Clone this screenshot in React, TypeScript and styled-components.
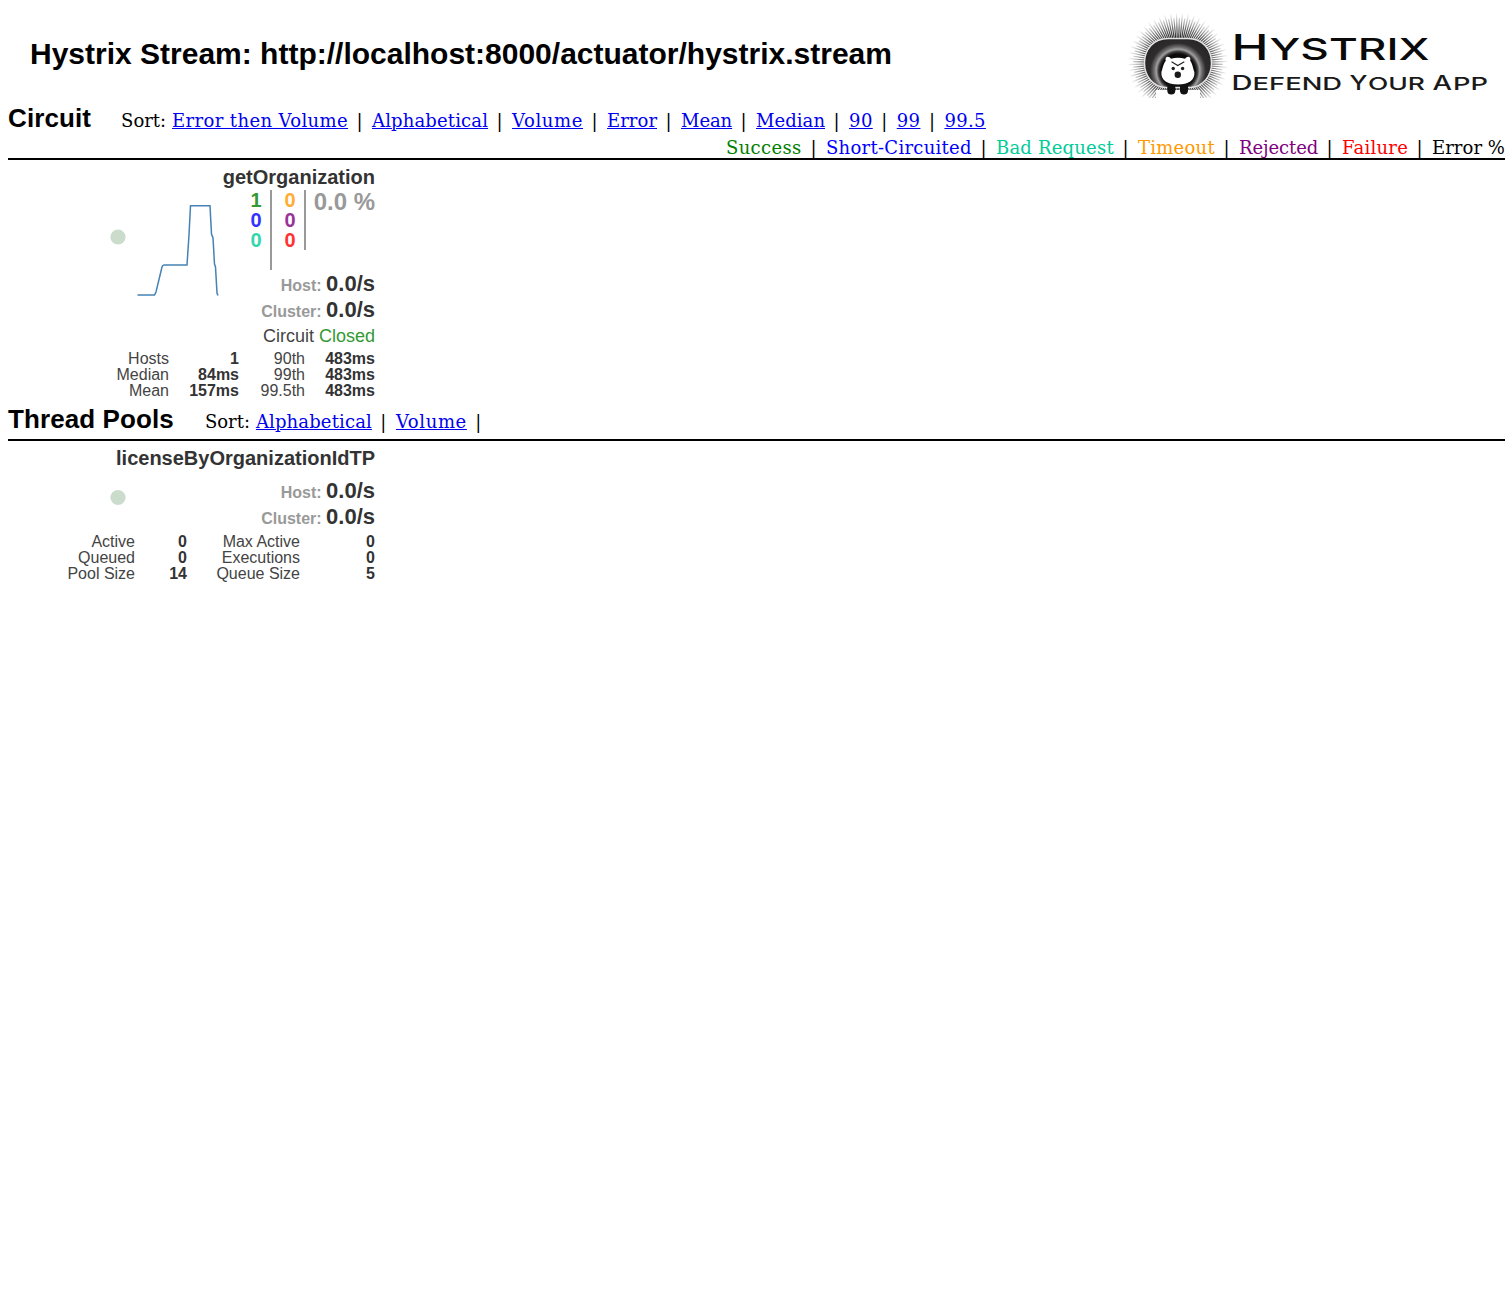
import React from "react";
import styled, { createGlobalStyle } from "styled-components";

const SANS = '"Liberation Sans", Arial, Helvetica, sans-serif';
const SERIF = '"DejaVu Serif", "Bookman Old Style", serif';

const GlobalStyle = createGlobalStyle`
  body { margin: 0; background: #fff; color: #000; }
  #root { width: 1512px; }
`;

const Page = styled.main`
  padding: 0 7px 0 8px;
  font: 18px/24px ${SERIF};
`;

const Header = styled.header`
  display: flex;
  justify-content: space-between;
  height: 103px;
  padding: 0 13px 0 22px;
`;

const Title = styled.h1`
  margin: 36px 0 0;
  font: bold 30px/36px ${SANS};
  white-space: nowrap;
`;

const LogoSvg = styled.svg`
  width: 364px;
  height: 90px;
  margin-top: 11px;
`;

const Section = styled.section`
  display: flex;
  flex-direction: column;
`;

const SectionBar = styled.div<{ $top?: number; $bottom?: number }>`
  display: flex;
  flex-direction: column;
  padding: ${(p) => p.$top ?? 0}px 0 ${(p) => p.$bottom ?? 0}px;
  border-bottom: 2px solid #000;
`;

const HeadRow = styled.div`
  display: flex;
  align-items: baseline;
  height: 30px;
`;

const Heading = styled.h2<{ $gap: number }>`
  margin: 0 ${(p) => p.$gap}px 0 0;
  font: bold 26px/30px ${SANS};
  letter-spacing: 0.1px;
  white-space: nowrap;
`;

const SortLabel = styled.span`
  width: 51px;
  line-height: 30px;
  white-space: nowrap;
`;

const Item = styled.span<{ $width: number; $spacing: number; $color?: string }>`
  width: ${(p) => p.$width}px;
  letter-spacing: ${(p) => p.$spacing}px;
  color: ${(p) => p.$color ?? "#000"};
  white-space: nowrap;
`;

const SortLink = styled(Item).attrs({ as: "a", href: "#" })`
  color: #0000ee;
  text-decoration: underline 1px;
  text-underline-offset: 1px;
`;

const Separator = styled.span`
  width: 24px;
  padding-right: 1px;
  box-sizing: border-box;
  text-align: center;
`;

const Legend = styled.div`
  display: flex;
  justify-content: flex-end;
  height: 22px;
  margin-top: 3px;
`;

const Tile = styled.article`
  width: 367px;
  color: #333;
  font: 16px/16px ${SANS};
`;

const TileName = styled.h3`
  margin: 5px 0 0;
  text-align: right;
  font: bold 20px/25px ${SANS};
`;

const TileBody = styled.div`
  display: flex;
  justify-content: space-between;
`;

const Plot = styled.svg`
  width: 215px;
  flex: none;
`;

const Readout = styled.div<{ $top: number }>`
  display: flex;
  flex-direction: column;
  align-items: flex-end;
  padding-top: ${(p) => p.$top}px;
`;

const Counters = styled.div`
  display: flex;
  align-items: flex-start;
  height: 81px;
  font-weight: bold;
`;

const CounterColumn = styled.div<{ $height: number; $width: number }>`
  display: flex;
  flex-direction: column;
  box-sizing: border-box;
  width: ${(p) => p.$width}px;
  height: ${(p) => p.$height}px;
  padding-right: 8.5px;
  border-right: 2px solid #999;
  text-align: right;
  font-size: 20px;
  line-height: 20px;
`;

const Count = styled.span<{ $color: string }>`
  color: ${(p) => p.$color};
`;

const ErrorRate = styled.div`
  width: 69px;
  color: #999;
  text-align: right;
  font-size: 24px;
  line-height: 24px;
  white-space: nowrap;
`;

const Rate = styled.div`
  height: 26px;
  font: bold 22px/26px ${SANS};
  white-space: nowrap;
`;

const RateLabel = styled.span`
  color: #999;
  font-size: 16px;
`;

const Status = styled.div`
  color: #444;
  font-size: 18px;
  line-height: 26px;
  span { color: #339933; }
`;

const Metrics = styled.div<{ $columns: string; $top: number }>`
  display: grid;
  grid-template-columns: ${(p) => p.$columns};
  grid-auto-rows: 16px;
  margin-top: ${(p) => p.$top}px;
  text-align: right;
  white-space: nowrap;
`;

const Name = styled.span`
  color: #444;
`;

const Value = styled.b`
  color: #333;
`;

type Entry = { text: string; width: number; spacing: number; color?: string };

const circuitSorts: Entry[] = [
  { text: "Error then Volume", width: 176, spacing: 0.38 },
  { text: "Alphabetical", width: 116, spacing: 0.14 },
  { text: "Volume", width: 71, spacing: 0.62 },
  { text: "Error", width: 50, spacing: 0.04 },
  { text: "Mean", width: 51, spacing: -0.08 },
  { text: "Median", width: 69, spacing: 0.05 },
  { text: "90", width: 23.7, spacing: 0.4 },
  { text: "99", width: 23.7, spacing: 0.4 },
  { text: "99.5", width: 41.5, spacing: 0.35 },
];

const poolSorts: Entry[] = [
  { text: "Alphabetical", width: 116, spacing: 0.14 },
  { text: "Volume", width: 71, spacing: 0.62 },
];

const legend: Entry[] = [
  { text: "Success", width: 76, spacing: 0.35, color: "green" },
  { text: "Short-Circuited", width: 146, spacing: 0.28, color: "blue" },
  { text: "Bad Request", width: 118, spacing: 0.2, color: "#00cc99" },
  { text: "Timeout", width: 77, spacing: 0.25, color: "#ff9900" },
  { text: "Rejected", width: 79, spacing: -0.1, color: "purple" },
  { text: "Failure", width: 66, spacing: 0.25, color: "red" },
  { text: "Error %", width: 73, spacing: 0.05 },
];

const circuitMetrics = [
  ["Hosts", "1", "90th", "483ms"],
  ["Median", "84ms", "99th", "483ms"],
  ["Mean", "157ms", "99.5th", "483ms"],
];

const poolMetrics = [
  ["Active", "0", "Max Active", "0"],
  ["Queued", "0", "Executions", "0"],
  ["Pool Size", "14", "Queue Size", "5"],
];

function SortBar({ items, trailing }: { items: Entry[]; trailing?: boolean }) {
  return (
    <>
      <SortLabel>Sort:</SortLabel>
      {items.map((it, i) => (
        <React.Fragment key={it.text}>
          <SortLink $width={it.width} $spacing={it.spacing}>{it.text}</SortLink>
          {(trailing || i < items.length - 1) && <Separator>|</Separator>}
        </React.Fragment>
      ))}
    </>
  );
}

function MetricGrid({ rows, columns, top }: { rows: string[][]; columns: string; top: number }) {
  return (
    <Metrics $columns={columns} $top={top}>
      {rows.flatMap((row, r) =>
        row.map((cell, c) => (c % 2 ? <Value key={`${r}-${c}`}>{cell}</Value> : <Name key={`${r}-${c}`}>{cell}</Name>))
      )}
    </Metrics>
  );
}

function Rates() {
  return (
    <>
      <Rate><RateLabel>Host: </RateLabel>0.0/s</Rate>
      <Rate><RateLabel>Cluster: </RateLabel>0.0/s</Rate>
    </>
  );
}

const QUILLS = 104;

function Logo() {
  const quills = Array.from({ length: QUILLS }, (_, i) => {
    const a = ((i + 0.5) / QUILLS) * Math.PI * 2;
    const reach = i % 2 ? 50 : 45;
    return { x: 50 + Math.cos(a) * reach, y: 52 + Math.sin(a) * reach };
  });
  return (
    <LogoSvg viewBox="0 0 364 90">
      <defs>
        <radialGradient id="quill" gradientUnits="userSpaceOnUse" cx="50" cy="52" r="50">
          <stop offset="0.5" stopColor="#222" />
          <stop offset="0.7" stopColor="#333" stopOpacity="0.75" />
          <stop offset="0.85" stopColor="#555" stopOpacity="0.4" />
          <stop offset="1" stopColor="#777" stopOpacity="0.04" />
        </radialGradient>
        <radialGradient id="body" gradientUnits="userSpaceOnUse" cx="50" cy="60" r="34">
          <stop offset="0.5" stopColor="#0c0a0b" />
          <stop offset="0.57" stopColor="#3a3839" />
          <stop offset="0.64" stopColor="#a0a0a0" />
          <stop offset="0.71" stopColor="#6c6a6b" />
          <stop offset="0.82" stopColor="#2f2c2d" />
          <stop offset="1" stopColor="#2a2728" />
        </radialGradient>
        <clipPath id="ground"><path d="M0 0H100V87H72V79H28V87H0Z" /></clipPath>
      </defs>
      <g clipPath="url(#ground)" stroke="url(#quill)" strokeWidth="1.2">
        {quills.map((q, i) => <line key={i} x1="50" y1="52" x2={q.x} y2={q.y} />)}
      </g>
      <path d="M40 27.5H60C74 27.5 83.5 38 83.5 52C83.5 65 75 75.5 63 76.5H37C25 75.5 16.5 65 16.5 52C16.5 38 26 27.5 40 27.5Z" fill="url(#body)" stroke="#e4e4e4" strokeWidth="1.4" />
      <path d="M39.3 70H47.3V80Q47 83.5 43.3 83.5T39.3 80ZM52 70H60V80Q59.6 83.5 56 83.5T52 80Z" fill="#111" />
      <path d="M37.8 49.8C36.3 45 41.3 44.6 43 47.8Q50 45.6 57 47.8C59 44.6 63.5 45 62.2 49.8C64.7 53 64.5 56 66.4 61C67.2 69.5 60 73.5 50 73.5S32.6 69.5 33.4 61C35.2 56 35.2 53 37.8 49.8Z" fill="#fff" />
      <path d="M43.5 50.8L49.8 54.5L56.3 50.8" fill="none" stroke="#222" strokeWidth="1.1" />
      <circle cx="45.2" cy="57.5" r="1.7" fill="#222" />
      <circle cx="54.6" cy="57.5" r="1.7" fill="#222" />
      <circle cx="49.8" cy="63.8" r="3.2" fill="#1a1a1a" />
      <g fontFamily='Inter, "Open Sans", sans-serif'>
        <g fill="#0a0a0a" fontWeight="500">
          <text x="103.6" y="49.3" fontSize="36" textLength="37" lengthAdjust="spacingAndGlyphs">H</text>
          <text x="141.5" y="49.3" fontSize="30" textLength="160" lengthAdjust="spacingAndGlyphs">YSTRIX</text>
        </g>
        <g fill="#1a1a1a" fontWeight="500">
          <text x="103.5" y="79.3" fontSize="20" textLength="21" lengthAdjust="spacingAndGlyphs">D</text>
          <text x="124.6" y="79.3" fontSize="17.7" textLength="89.5" lengthAdjust="spacingAndGlyphs">EFEND</text>
          <text x="221.5" y="79.3" fontSize="20" textLength="18" lengthAdjust="spacingAndGlyphs">Y</text>
          <text x="240" y="79.3" fontSize="17.7" textLength="57" lengthAdjust="spacingAndGlyphs">OUR</text>
          <text x="304.5" y="79.3" fontSize="20" textLength="19.5" lengthAdjust="spacingAndGlyphs">A</text>
          <text x="325" y="79.3" fontSize="17.7" textLength="35" lengthAdjust="spacingAndGlyphs">PP</text>
        </g>
      </g>
    </LogoSvg>
  );
}

export default function App() {
  return (
    <>
      <GlobalStyle />
      <Page>
        <Header>
          <Title>Hystrix Stream: http://localhost:8000/actuator/hystrix.stream</Title>
          <Logo />
        </Header>

        <Section>
          <SectionBar>
            <HeadRow>
              <Heading $gap={30}>Circuit</Heading>
              <SortBar items={circuitSorts} />
            </HeadRow>
            <Legend>
              {legend.map((it, i) => (
                <React.Fragment key={it.text}>
                  {i > 0 && <Separator>|</Separator>}
                  <Item $width={it.width} $spacing={it.spacing} $color={it.color}>{it.text}</Item>
                </React.Fragment>
              ))}
            </Legend>
          </SectionBar>
          <Tile>
            <TileName>getOrganization</TileName>
            <TileBody>
              <Plot viewBox="0 0 215 159" height="159">
                <circle cx="110" cy="47" r="7.6" fill="#ccdccc" />
                <path
                  d="M129.5 105H146.5L148 102L154 77Q154.5 75 156 75H179L181 45L182.5 15.7H202L203.5 44L205 48L206.5 74L207.5 77L209 103L210 105.5"
                  fill="none" stroke="#4682b4" strokeWidth="1.5"
                />
              </Plot>
              <Readout $top={0}>
                <Counters>
                  <CounterColumn $height={80} $width={40}>
                    <Count $color="#339933">1</Count>
                    <Count $color="#3333ff">0</Count>
                    <Count $color="#33d6ad">0</Count>
                  </CounterColumn>
                  <CounterColumn $height={60} $width={34}>
                    <Count $color="#ffad33">0</Count>
                    <Count $color="#993399">0</Count>
                    <Count $color="#ff3333">0</Count>
                  </CounterColumn>
                  <ErrorRate>0.0 %</ErrorRate>
                </Counters>
                <Rates />
                <Status>Circuit <span>Closed</span></Status>
              </Readout>
            </TileBody>
            <MetricGrid rows={circuitMetrics} columns="161px 70px 66px 70px" top={2} />
          </Tile>
        </Section>

        <Section>
          <SectionBar $top={5} $bottom={5}>
            <HeadRow>
              <Heading $gap={31}>Thread Pools</Heading>
              <SortBar items={poolSorts} trailing />
            </HeadRow>
          </SectionBar>
          <Tile>
            <TileName>licenseByOrganizationIdTP</TileName>
            <TileBody>
              <Plot viewBox="0 0 215 59" height="59">
                <circle cx="110" cy="26.5" r="7.6" fill="#ccdccc" />
              </Plot>
              <Readout $top={7}>
                <Rates />
              </Readout>
            </TileBody>
            <MetricGrid rows={poolMetrics} columns="127px 52px 113px 75px" top={4} />
          </Tile>
        </Section>
      </Page>
    </>
  );
}
